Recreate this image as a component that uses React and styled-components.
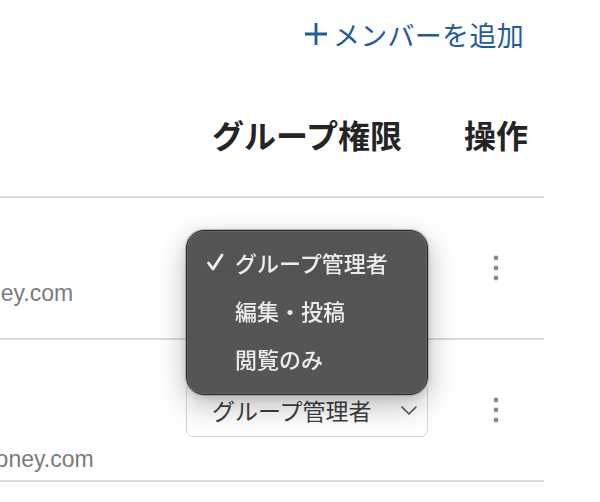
import React from "react";
import styled, { createGlobalStyle } from "styled-components";

const Global = createGlobalStyle`
  html, body { margin: 0; padding: 0; background: #fff; }
  body {
    font-family: "Noto Sans CJK JP", "Noto Sans", sans-serif;
    -webkit-font-smoothing: antialiased;
  }
`;

const Viewport = styled.div`
  width: 600px;
  height: 502px;
  overflow: hidden;
  position: relative;
`;

const Content = styled.div`
  width: 792px;
  margin-left: -248px;
`;

const Toolbar = styled.div`
  height: 68px;
  display: flex;
  align-items: center;
  justify-content: flex-end;
  padding-right: 20px;
`;

const AddButton = styled.button`
  border: none;
  background: none;
  padding: 0;
  font-family: "Noto Sans CJK JP", sans-serif;
  font-size: 27px;
  letter-spacing: 0.3px;
  color: #1f5c9d;
  cursor: pointer;
  display: flex;
  align-items: center;
  gap: 5px;
  line-height: 1;
`;

const Row = styled.div`
  display: grid;
  grid-template-columns: 414px 282px 96px;
  height: ${(p) => p.$height}px;
  border-bottom: 2px solid #dadada;
  box-sizing: content-box;
`;

const HeadCell = styled.div`
  display: flex;
  align-items: center;
  justify-content: center;
  padding-top: 4px;
  font-size: 32px;
  font-weight: 700;
  color: #242424;
`;

const MemberCell = styled.div`
  display: flex;
  flex-direction: column;
  justify-content: center;
  padding: 4px 0 0 17px;
  overflow: hidden;
  white-space: nowrap;
`;

const MemberLine = styled.div`
  height: 47px;
  line-height: 47px;
  font-size: ${(p) => (p.$name ? 24 : 23)}px;
  font-weight: ${(p) => (p.$name ? 700 : 400)};
  color: ${(p) => (p.$name ? "#222" : "#7b7b7b")};
  font-family: ${(p) =>
    p.$email ? '"Liberation Sans", Arial, sans-serif' : '"Noto Sans CJK JP", sans-serif'};
`;

const RoleCell = styled.div`
  display: flex;
  align-items: center;
  padding: 0 20px;
`;

const SelectWrap = styled.div`
  position: relative;
  width: 100%;
`;

const SelectBox = styled.div`
  height: 54px;
  box-sizing: border-box;
  border: 1.5px solid #d7d7d7;
  border-radius: 7px;
  background: #fff;
  display: flex;
  align-items: center;
  justify-content: space-between;
  padding: 0 9px 0 25px;
  font-size: 23px;
  color: #3f3f3f;
`;

const ActionCell = styled.div`
  display: flex;
  align-items: center;
  justify-content: center;
`;

const KebabButton = styled.button`
  border: none;
  background: none;
  padding: 4px;
  display: flex;
  cursor: pointer;
`;

const Menu = styled.div`
  position: absolute;
  top: -11px;
  left: 0;
  width: 100%;
  box-sizing: border-box;
  padding: 7px 0 12px;
  border-radius: 18px;
  background: rgba(70, 70, 70, 0.92);
  backdrop-filter: blur(10px);
  border: 1px solid #2c2c2c;
  box-shadow: 0 0 0 1px rgba(140, 140, 140, 0.55),
    inset 0 0 0 1px rgba(255, 255, 255, 0.08),
    0 10px 30px rgba(0, 0, 0, 0.28), 0 2px 8px rgba(0, 0, 0, 0.12);
  z-index: 5;
`;

const MenuItem = styled.div`
  height: 48px;
  display: flex;
  align-items: center;
  padding-left: 48px;
  position: relative;
  font-size: 22px;
  font-weight: 500;
  color: #ececec;
`;

const Check = styled.svg`
  position: absolute;
  left: 19px;
  top: 50%;
  transform: translateY(-50%);
`;

const Chevron = () => (
  <svg width="18" height="12" viewBox="0 0 18 12">
    <path d="M2 3 L9 10 L16 3" fill="none" stroke="#555" strokeWidth="1.6" strokeLinecap="round" strokeLinejoin="round" />
  </svg>
);

const Plus = () => (
  <svg width="24" height="24" viewBox="0 0 24 24">
    <path d="M12 1 V23 M1 12 H23" fill="none" stroke="#1f5c9d" strokeWidth="2.8" />
  </svg>
);

const Kebab = () => (
  <svg width="8" height="28" viewBox="0 0 8 28">
    <circle cx="4" cy="4" r="2.4" fill="#8a8a8a" />
    <circle cx="4" cy="14" r="2.4" fill="#8a8a8a" />
    <circle cx="4" cy="24" r="2.4" fill="#8a8a8a" />
  </svg>
);

const ROLES = ["グループ管理者", "編集・投稿", "閲覧のみ"];

const members = [
  { lines: ["山田 花子"], email: "yamada.hanako@money.com", role: "グループ管理者", open: true },
  { lines: ["山本 遥", "招待中"], email: "yamamoto.haruka@money.com", role: "グループ管理者", open: false },
];

function RoleSelect({ value, open }) {
  return (
    <SelectWrap>
      <SelectBox>
        <span>{value}</span>
        <Chevron />
      </SelectBox>
      {open && (
        <Menu>
          {ROLES.map((r) => (
            <MenuItem key={r}>
              {r === value && (
                <Check width="18" height="20" viewBox="0 0 18 20">
                  <path d="M2.5 11 L7 17 L16 3" fill="none" stroke="#f2f2f2" strokeWidth="2.8" strokeLinecap="round" strokeLinejoin="round" />
                </Check>
              )}
              {r}
            </MenuItem>
          ))}
        </Menu>
      )}
    </SelectWrap>
  );
}

export default function App() {
  return (
    <Viewport>
      <Global />
      <Content>
        <Toolbar>
          <AddButton>
            <Plus />
            メンバーを追加
          </AddButton>
        </Toolbar>
        <Row $height={128}>
          <HeadCell />
          <HeadCell>グループ権限</HeadCell>
          <HeadCell>操作</HeadCell>
        </Row>
        {members.map((m) => (
          <Row key={m.email} $height={140}>
            <MemberCell>
              {m.lines.map((l, i) => (
                <MemberLine key={l} $name={i === 0}>{l}</MemberLine>
              ))}
              <MemberLine $email>{m.email}</MemberLine>
            </MemberCell>
            <RoleCell>
              <RoleSelect value={m.role} open={m.open} />
            </RoleCell>
            <ActionCell>
              <KebabButton aria-label="操作">
                <Kebab />
              </KebabButton>
            </ActionCell>
          </Row>
        ))}
      </Content>
    </Viewport>
  );
}
